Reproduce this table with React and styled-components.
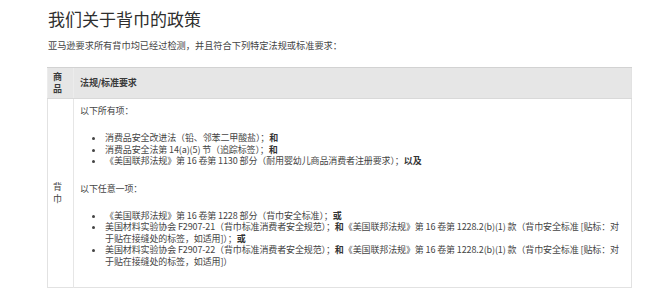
import React from 'react'
import styled, { createGlobalStyle } from 'styled-components'

const GlobalStyle = createGlobalStyle`
  html, body {
    margin: 0;
    padding: 0;
    background: #fff;
  }
  body {
    font-family: "Noto Sans CJK SC", "Noto Sans", sans-serif;
    color: #444;
  }
`

const rows = [
  {
    product: '背巾',
    groups: [
      {
        lead: '以下所有项：',
        items: [
          <>消费品安全改进法（铅、邻苯二甲酸盐）；<b>和</b></>,
          <>消费品安全法第 14(a)(5) 节（追踪标签）；<b>和</b></>,
          <>《美国联邦法规》第 16 卷第 1130 部分（耐用婴幼儿商品消费者注册要求）；<b>以及</b></>
        ]
      },
      {
        lead: '以下任意一项：',
        items: [
          <>《美国联邦法规》第 16 卷第 1228 部分（背巾安全标准）；<b>或</b></>,
          <>美国材料实验协会 F2907-21（背巾标准消费者安全规范）；<b>和</b>《美国联邦法规》第 16 卷第 1228.2(b)(1) 款（背巾安全标准 [贴标：对<br />于贴在接缝处的标签，如适用]）；<b>或</b></>,
          <>美国材料实验协会 F2907-22（背巾标准消费者安全规范）；<b>和</b>《美国联邦法规》第 16 卷第 1228.2(b)(1) 款（背巾安全标准 [贴标：对<br />于贴在接缝处的标签，如适用]）</>
        ]
      }
    ]
  }
]

export default function App() {
  return (
    <>
      <GlobalStyle />
      <Page>
        <Title>我们关于背巾的政策</Title>
        <Intro>亚马逊要求所有背巾均已经过检测，并且符合下列特定法规或标准要求：</Intro>
        <PolicyTable>
          <thead>
            <tr>
              <HeadCell narrow>商品</HeadCell>
              <HeadCell>法规/标准要求</HeadCell>
            </tr>
          </thead>
          <tbody>
            {rows.map(row => (
              <tr key={row.product}>
                <ProductCell>{row.product}</ProductCell>
                <RuleCell>
                  {row.groups.map((g, i) => (
                    <React.Fragment key={i}>
                      <Lead>{g.lead}</Lead>
                      <RuleList>
                        {g.items.map((item, j) => (
                          <li key={j}>{item}</li>
                        ))}
                      </RuleList>
                    </React.Fragment>
                  ))}
                </RuleCell>
              </tr>
            ))}
          </tbody>
        </PolicyTable>
      </Page>
    </>
  )
}

const Page = styled.div`
  padding: 8px 28px 0 47px;
`
const Title = styled.h2`
  margin: 0;
  font-size: 17px;
  line-height: 22px;
  font-weight: 400;
  color: #2f2f2f;
  padding-left: 1px;
`
const Intro = styled.p`
  margin: 9px 0 0;
  font-size: 9.2px;
  line-height: 12px;
  color: #444;
  padding-left: 1px;
`
const PolicyTable = styled.table`
  margin-top: 16px;
  width: 585px;
  border-collapse: collapse;
  border: 1px solid #e2e2e2;
  font-size: 9px;
  line-height: 11.4px;
  letter-spacing: -0.12px;
`
const HeadCell = styled.th`
  background: #e6e6e6;
  border-top: 1px solid #d2d2d2;
  border-bottom: 1px solid #d9d9d9;
  border-left: 1px solid #ececec;
  text-align: left;
  vertical-align: middle;
  font-weight: 700;
  color: #3a3a3a;
  height: 31px;
  padding: 0 6px;
  line-height: 12px;
  box-sizing: border-box;
  width: ${p => (p.narrow ? '26px' : 'auto')};
  ${p => p.narrow && 'padding: 0 5px; word-break: break-all;'}
`
const ProductCell = styled.td`
  width: 26px;
  padding: 0 5px;
  box-sizing: border-box;
  vertical-align: middle;
  line-height: 12px;
  word-break: break-all;
  color: #444;
  border-right: 1px solid #e6e6e6;
`
const RuleCell = styled.td`
  padding: 6px 5px 4px 6px;
  vertical-align: top;
  color: #444;
`
const Lead = styled.div`
  margin: 0;
`
const RuleList = styled.ul`
  margin: 16px 0;
  padding-left: 25px;
  list-style: disc;
  li {
    margin: 0;
  }
  b {
    font-weight: 700;
    color: #333;
  }
`
